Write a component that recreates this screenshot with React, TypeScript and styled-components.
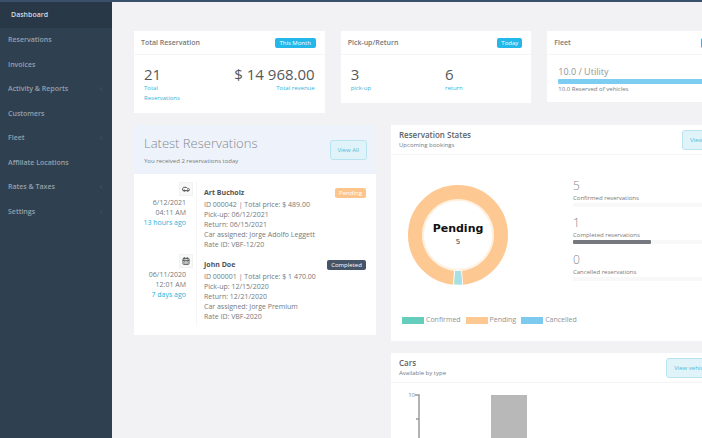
import React from "react";
import styled, { createGlobalStyle } from "styled-components";
import { ChevronLeft, Car, CalendarDays } from "lucide-react";

const GlobalStyle = createGlobalStyle`
  *, *::before, *::after { box-sizing: border-box; }
  body {
    margin: 0;
    background: #f2f2f4;
    color: #76797b;
    font-family: "Open Sans", "Liberation Sans", sans-serif;
    font-size: 7px;
    line-height: 10px;
  }
  h1, h2, h3, p, ul { margin: 0; padding: 0; }
`;

const Page = styled.div`
  display: flex;
  height: 100vh;
  overflow: hidden;
  border-top: 2px solid #3b506a;
`;

const Sidebar = styled.nav`
  flex: 0 0 112px;
  background: #2f4050;
`;

const Menu = styled.ul`
  display: grid;
  grid-template-rows: 26px repeat(8, 1fr);
  height: 222px;
  list-style: none;
`;

const MenuLink = styled.a<{ $active?: boolean }>`
  display: flex;
  align-items: center;
  justify-content: space-between;
  height: 100%;
  padding: 0 8px 0 ${(p) => (p.$active ? 11 : 8)}px;
  background: ${(p) => (p.$active ? "#293846" : "transparent")};
  color: ${(p) => (p.$active ? "#d5dade" : "#94a1ae")};
  font-weight: 600;
  text-decoration: none;
  svg { color: #50616f; }
`;

const Main = styled.main`
  flex: 1;
  min-width: 0;
  overflow: hidden;
`;

const Canvas = styled.div`
  margin-right: -36px;
  padding: 29px 0 0 22px;
`;

const StatRow = styled.section`
  display: grid;
  grid-template-columns: repeat(3, 1fr);
  align-items: start;
  gap: 16px;
  margin-bottom: 12px;
`;

const PanelRow = styled.section`
  display: grid;
  grid-template-columns: 242fr 347fr;
  align-items: start;
  gap: 15px;
`;

const Stack = styled.div`
  display: grid;
  gap: 12px;
`;

const Card = styled.article`
  min-width: 0;
  background: #fff;
`;

const StatHeader = styled.header`
  display: flex;
  align-items: center;
  justify-content: space-between;
  height: 24px;
  padding: 0 9px 0 7px;
  border-bottom: 1px solid #f5f5f6;
`;

const StatTitle = styled.h3`
  font-size: 7px;
  font-weight: 600;
`;

const Badge = styled.span<{ $tone: string; $width: number }>`
  flex: none;
  width: ${(p) => p.$width}px;
  border-radius: 2px;
  background: ${(p) => p.$tone};
  color: #fff;
  font-size: 6px;
  font-weight: 400;
  text-align: center;
`;

const StatBody = styled.div<{ $split?: boolean }>`
  display: ${(p) => (p.$split ? "grid" : "flex")};
  grid-template-columns: 1fr 1fr;
  gap: 18px;
  justify-content: space-between;
  padding: 10px;
`;

const Figure = styled.div<{ $end?: boolean }>`
  text-align: ${(p) => (p.$end ? "right" : "left")};
`;

const Value = styled.p`
  color: #55585a;
  font-size: 15px;
  line-height: 18px;
`;

const Caption = styled.p`
  color: #35b4d8;
  font-size: 6px;
`;

const FleetBody = styled.div`
  padding: 10px 11px 8px;
`;

const FleetValue = styled.p`
  color: #909395;
  font-size: 9px;
  line-height: 14px;
`;

const Track = styled.div<{ $tall?: boolean }>`
  height: ${(p) => (p.$tall ? 5 : 4)}px;
  border-radius: 1px;
  background: #f8f8f9;
`;

const Fill = styled.div<{ $tone: string }>`
  height: 100%;
  border-radius: 1px;
  background: ${(p) => p.$tone};
`;

const Small = styled.p`
  font-size: 6px;
`;

const LatestHeader = styled.header`
  display: flex;
  align-items: center;
  justify-content: space-between;
  height: 49px;
  padding: 0 9px 0 10px;
  background: #eef3fb;
`;

const LatestTitle = styled.h1`
  margin-bottom: 4px;
  color: #85898f;
  font-size: 13px;
  font-weight: 300;
  line-height: 18px;
`;

const OutlineButton = styled.button`
  flex: none;
  height: 20px;
  padding: 0 7px;
  border: 1px solid #b9e3f0;
  border-radius: 3px;
  background: #e0f3f9;
  color: #4dbbdb;
  font: 400 6px/10px "Open Sans", "Liberation Sans", sans-serif;
`;

const Timeline = styled.div`
  padding: 8px 10px 9px 0;
`;

const Entry = styled.div`
  display: grid;
  grid-template-columns: 63px 1fr auto;
  height: 72px;
`;

const When = styled.div`
  display: flex;
  flex-direction: column;
  align-items: flex-end;
  padding-right: 10px;
  border-right: 1px solid #f7f7f8;
  text-align: right;
`;

const IconBox = styled.span`
  display: grid;
  place-items: center;
  width: 14px;
  height: 14px;
  margin: 0 -7px 2px 0;
  border: 1px solid #f2f2f3;
  background: #f8f8f8;
  color: #55585a;
`;

const Ago = styled.span`
  color: #1fb3dc;
  white-space: nowrap;
`;

const Details = styled.div`
  padding: 6px 0 0 7px;
  white-space: nowrap;
`;

const Name = styled.h3`
  margin-bottom: 2px;
  color: #505355;
  font-size: 7px;
  font-weight: 700;
`;

const BadgeSlot = styled.div`
  padding-top: 6px;
`;

const PanelHeader = styled.header`
  display: flex;
  align-items: center;
  justify-content: space-between;
  height: 30px;
  padding: 0 19px 0 8px;
  border-bottom: 1px solid #f4f4f5;
`;

const PanelTitle = styled.h2`
  color: #606365;
  font-size: 8px;
  font-weight: 600;
`;

const StatesBody = styled.div`
  display: grid;
  grid-template-columns: 171px 1fr;
  gap: 10px;
  height: 186px;
  padding: 18px 10px 16px 1px;
`;

const ChartColumn = styled.div`
  display: flex;
  flex-direction: column;
  justify-content: space-between;
  padding-top: 11px;
`;

const Donut = styled.svg`
  display: block;
  width: 100px;
  height: 102px;
  margin-left: 16px;
`;

const Legend = styled.ul`
  display: flex;
  gap: 5px;
  padding-left: 10px;
  list-style: none;
  color: #909395;
  white-space: nowrap;
`;

const LegendItem = styled.li<{ $tone: string }>`
  display: flex;
  align-items: center;
  gap: 2px;
  &::before {
    content: "";
    width: 22px;
    height: 7px;
    background: ${(p) => p.$tone};
  }
`;

const StateList = styled.div`
  display: grid;
  align-content: start;
  gap: 3px;
`;

const StateValue = styled.p`
  color: #85888a;
  font-size: 12px;
  font-weight: 300;
  line-height: 14px;
`;

const StateItem = styled.div`
  display: grid;
  height: 34px;
  align-content: end;
`;

const BarChart = styled.svg`
  display: block;
  width: 100%;
  height: 140px;
`;

const menu = [
  { label: "Dashboard", active: true },
  { label: "Reservations" },
  { label: "Invoices" },
  { label: "Activity & Reports", more: true },
  { label: "Customers" },
  { label: "Fleet", more: true },
  { label: "Affiliate Locations" },
  { label: "Rates & Taxes", more: true },
  { label: "Settings", more: true },
];

const entries = [
  {
    icon: Car, date: "6/12/2021", time: "04:11 AM", ago: "13 hours ago", name: "Art Bucholz",
    badge: "Pending", tone: "#fdc58c", width: 31,
    lines: ["ID 000042  |  Total price: $ 489.00", "Pick-up: 06/12/2021", "Return: 06/15/2021", "Car assigned: Jorge Adolfo Leggett", "Rate ID: VBF-12/20"],
  },
  {
    icon: CalendarDays, date: "06/11/2020", time: "12:01 AM", ago: "7 days ago", name: "John Doe",
    badge: "Completed", tone: "#465468", width: 39,
    lines: ["ID 000001  |  Total price: $ 1 470.00", "Pick-up: 12/15/2020", "Return: 12/21/2020", "Car assigned: Jorge Premium", "Rate ID: VBF-2020"],
  },
];

const states = [
  { value: 5, label: "Confirmed reservations", share: 0 },
  { value: 1, label: "Completed reservations", share: 50 },
  { value: 0, label: "Cancelled reservations", share: 0 },
];

export default function App() {
  return (
    <Page>
      <GlobalStyle />
      <Sidebar>
        <Menu>
          {menu.map((item) => (
            <li key={item.label}>
              <MenuLink href="#" $active={item.active}>
                {item.label}
                {item.more && <ChevronLeft size={6} />}
              </MenuLink>
            </li>
          ))}
        </Menu>
      </Sidebar>
      <Main>
        <Canvas>
          <StatRow>
            <Card>
              <StatHeader>
                <StatTitle>Total Reservation</StatTitle>
                <Badge $tone="#23b7ea" $width={41}>This Month</Badge>
              </StatHeader>
              <StatBody>
                <Figure>
                  <Value>21</Value>
                  <Caption>Total<br />Reservations</Caption>
                </Figure>
                <Figure $end>
                  <Value>$ 14 968.00</Value>
                  <Caption>Total revenue</Caption>
                </Figure>
              </StatBody>
            </Card>
            <Card>
              <StatHeader>
                <StatTitle>Pick-up/Return</StatTitle>
                <Badge $tone="#23b7ea" $width={25}>Today</Badge>
              </StatHeader>
              <StatBody $split>
                <Figure>
                  <Value>3</Value>
                  <Caption>pick-up</Caption>
                </Figure>
                <Figure>
                  <Value>6</Value>
                  <Caption>return</Caption>
                </Figure>
              </StatBody>
            </Card>
            <Card>
              <StatHeader>
                <StatTitle>Fleet</StatTitle>
                <Badge $tone="#23b7ea" $width={28}>Today</Badge>
              </StatHeader>
              <FleetBody>
                <FleetValue>10.0 / Utility</FleetValue>
                <Track $tall><Fill $tone="#7ccdf1" /></Track>
                <Small>10.0 Reserved of vehicles</Small>
              </FleetBody>
            </Card>
          </StatRow>
          <PanelRow>
            <Card>
              <LatestHeader>
                <div>
                  <LatestTitle>Latest Reservations</LatestTitle>
                  <Small>You received 2 reservations today</Small>
                </div>
                <OutlineButton>View All</OutlineButton>
              </LatestHeader>
              <Timeline>
                {entries.map((e) => (
                  <Entry key={e.name}>
                    <When>
                      <IconBox><e.icon size={8} strokeWidth={3} /></IconBox>
                      <span>{e.date}</span>
                      <span>{e.time}</span>
                      <Ago>{e.ago}</Ago>
                    </When>
                    <Details>
                      <Name>{e.name}</Name>
                      {e.lines.map((line) => <p key={line}>{line}</p>)}
                    </Details>
                    <BadgeSlot>
                      <Badge as="div" $tone={e.tone} $width={e.width}>{e.badge}</Badge>
                    </BadgeSlot>
                  </Entry>
                ))}
              </Timeline>
            </Card>
            <Stack>
              <Card>
                <PanelHeader>
                  <div>
                    <PanelTitle>Reservation States</PanelTitle>
                    <Small>Upcoming bookings</Small>
                  </div>
                  <OutlineButton>View all</OutlineButton>
                </PanelHeader>
                <StatesBody>
                  <ChartColumn>
                    <Donut viewBox="0 0 100 102" role="img" aria-label="Reservation states">
                      <circle cx="50" cy="51" r="35" fill="none" stroke="#fff0e0" strokeWidth="2" />
                      <circle cx="50" cy="51" r="43" fill="none" stroke="#fdc891" strokeWidth="14" />
                      <path d="M46 86.5 L54 86.5 L55 101 L45 101 Z" fill="#fff" />
                      <path d="M47 87 L53 87 L54 100.5 L46 100.5 Z" fill="#a5e3d8" />
                      <path d="M50 87 L53 87 L54 100.5 L50 100.5 Z" fill="#a9ddeb" />
                      <text x="50" y="48" textAnchor="middle" fontFamily="DejaVu Sans, sans-serif" fontSize="11" fontWeight="700" fill="#111">Pending</text>
                      <text x="50" y="60" textAnchor="middle" fontFamily="DejaVu Sans, sans-serif" fontSize="7" fill="#333">5</text>
                    </Donut>
                    <Legend>
                      <LegendItem $tone="#64cdbb">Confirmed</LegendItem>
                      <LegendItem $tone="#fdc891">Pending</LegendItem>
                      <LegendItem $tone="#7ccbee">Cancelled</LegendItem>
                    </Legend>
                  </ChartColumn>
                  <StateList>
                    {states.map((s) => (
                      <StateItem key={s.label}>
                        <StateValue>{s.value}</StateValue>
                        <Small>{s.label}</Small>
                        <Track><Fill $tone="#75797f" style={{ width: `${s.share}%` }} /></Track>
                      </StateItem>
                    ))}
                  </StateList>
                </StatesBody>
              </Card>
              <Card>
                <PanelHeader>
                  <div>
                    <PanelTitle>Cars</PanelTitle>
                    <Small>Available by type</Small>
                  </div>
                  <OutlineButton>View vehicles</OutlineButton>
                </PanelHeader>
                <BarChart viewBox="0 0 347 140" preserveAspectRatio="xMinYMin meet" role="img" aria-label="Cars by type">
                  <path d="M24 12 H28 V130 M25 36 H28 M25 60 H28 M25 84 H28 M25 108 H28" fill="none" stroke="#999" strokeWidth="1.5" />
                  <text x="24" y="14" textAnchor="end" fontSize="6" fill="#888">10</text>
                  <rect x="100" y="12" width="36" height="118" fill="#b8b8b8" />
                </BarChart>
              </Card>
            </Stack>
          </PanelRow>
        </Canvas>
      </Main>
    </Page>
  );
}
